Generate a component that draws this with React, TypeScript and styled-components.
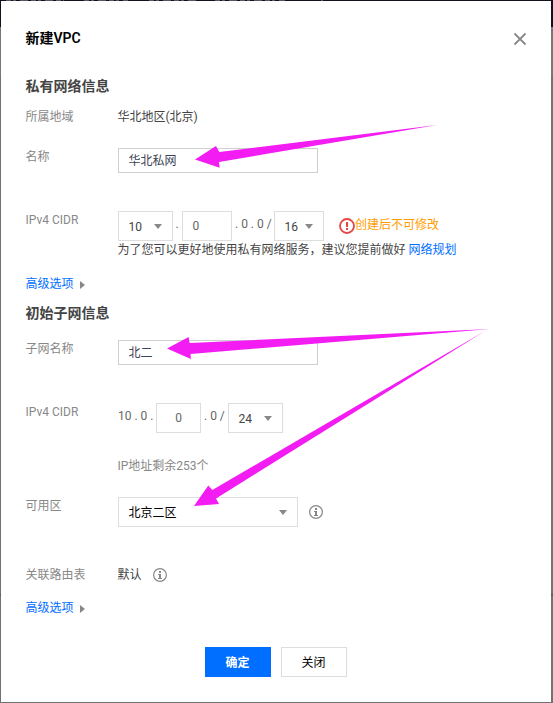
import React from "react";
import styled, { createGlobalStyle } from "styled-components";

const GlobalStyle = createGlobalStyle`
  * { box-sizing: border-box; }
  body {
    margin: 0;
    font-family: Roboto, "Noto Sans CJK SC", sans-serif;
    font-size: 12px;
    line-height: 20px;
    color: #444;
  }
`;

const Backdrop = styled.div`
  position: relative;
  width: 553px;
  height: 703px;
  padding: 1px 2px 1px 1px;
  overflow: hidden;
  background: linear-gradient(#12121f 0 27px, #777 27px 77px, #6c6c6c 77px 78px, #727272 78px 594px, #5e5e5e 594px 596px, #727272 596px);
`;

const Modal = styled.main`
  display: flex;
  flex-direction: column;
  height: 701px;
  padding: 27px 24px 0;
  background: #fff;
`;

const Header = styled.header`
  display: flex;
  justify-content: space-between;
  height: 20px;
  margin-bottom: 28px;
`;

const Title = styled.h1`
  margin: 0;
  padding-left: 0.5px;
  font-size: 14px;
  line-height: 20px;
  font-weight: 600;
  color: #000;
`;

const CloseButton = styled.button`
  width: 14px;
  height: 14px;
  margin: 4px 0 0;
  padding: 0;
  border: 0;
  background: none;
  svg { display: block; }
`;

const SectionTitle = styled.h2<{ $gap: number }>`
  height: 20px;
  margin: 0 0 ${(p) => p.$gap}px;
  padding-left: 0.5px;
  font-size: 14px;
  line-height: 20px;
  font-weight: 600;
  color: #444;
`;

const Row = styled.div<{ $height: number }>`
  display: flex;
  flex: none;
  height: ${(p) => p.$height}px;
`;

const Label = styled.div`
  width: 92px;
  flex: none;
  padding: 1px 0 0 0.5px;
  color: #888;
`;

const Field = styled.div`
  padding: 2px 0 0 1px;
`;

const Value = styled.div`
  display: flex;
  gap: 11px;
  padding: 1px 0 0 0.5px;
  color: #444;
  svg { margin-top: 3px; }
`;

const Line = styled.div`
  display: flex;
  height: 30px;
`;

const TextInput = styled.div`
  display: flex;
  align-items: center;
  width: 200px;
  height: 25px;
  padding: 0 9.5px;
  border: 1px solid #cfcfcf;
  color: #3c4353;
`;

const NumberInput = styled.div<{ $width: number; $center?: boolean }>`
  width: ${(p) => p.$width}px;
  height: 30px;
  padding: ${(p) => (p.$center ? "0" : "0 9.5px")};
  border: 1px solid #ddd;
  line-height: 28px;
  text-align: ${(p) => (p.$center ? "center" : "left")};
  color: #666;
`;

const SelectBox = styled.div<{ $width: number; $dark?: boolean }>`
  display: flex;
  align-items: center;
  justify-content: space-between;
  width: ${(p) => p.$width}px;
  height: 30px;
  padding: 0 10px 0 9.5px;
  border: 1px solid #ddd;
  color: ${(p) => (p.$dark ? "#000" : "#444")};
  span { padding-top: 2px; }
`;

const Separator = styled.span<{ $width: number; $pad?: number }>`
  width: ${(p) => p.$width}px;
  flex: none;
  padding: 3px 0 0 ${(p) => p.$pad ?? 0}px;
  white-space: nowrap;
  color: #666;
`;

const Warning = styled.div`
  display: flex;
  margin-left: 15px;
  padding-top: 4px;
  color: #ff9d00;
  svg { margin-top: 3px; }
`;

const Hint = styled.div`
  height: 20px;
  margin: -1px 0 0 -0.5px;
  white-space: nowrap;
`;

const Link = styled.a`
  color: #006eff;
`;

const Muted = styled.div`
  margin: 23px 0 0 -0.5px;
  color: #888;
`;

const Toggle = styled.div<{ $gap: number }>`
  display: flex;
  gap: 6px;
  height: 20px;
  margin-bottom: ${(p) => p.$gap}px;
  padding: 1px 0 0 0.5px;
  color: #006eff;
  svg { margin-top: 7px; }
`;

const ZoneLine = styled.div`
  display: flex;
  align-items: center;
  gap: 11px;
`;

const Footer = styled.footer`
  display: flex;
  justify-content: center;
  gap: 10px;
`;

const Button = styled.button<{ $primary?: boolean }>`
  width: 66px;
  height: 30px;
  padding: 2px 1px 0 0;
  border: 1px solid ${(p) => (p.$primary ? "#006eff" : "#ddd")};
  background: ${(p) => (p.$primary ? "#006eff" : "#fff")};
  color: ${(p) => (p.$primary ? "#fff" : "#000")};
  font: ${(p) => (p.$primary ? 600 : 400)} 12px/26px Roboto, "Noto Sans CJK SC", sans-serif;
`;

const Annotations = styled.svg`
  position: absolute;
  inset: 0;
  pointer-events: none;
`;

const Caret = () => (
  <svg width="8" height="5" viewBox="0 0 8 5"><path d="M0 0h8L4 5z" fill="#888" /></svg>
);

const RightCaret = () => (
  <svg width="5" height="8" viewBox="0 0 5 8"><path d="M0 0l5 4-5 4z" fill="#888" /></svg>
);

const InfoIcon = () => (
  <svg width="14" height="14" viewBox="0 0 14 14">
    <circle cx="7" cy="7" r="6.4" fill="none" stroke="#888" strokeWidth="1.2" />
    <path d="M6 3h2v2H6zM5 6h3v4h1v1H5v-1h1V7H5z" fill="#888" />
  </svg>
);

const AlertIcon = () => (
  <svg width="16" height="16" viewBox="0 0 16 16">
    <circle cx="8" cy="8" r="7" fill="none" stroke="#e54545" strokeWidth="1.8" />
    <path d="M7 4h2v5H7zM7 10h2v2H7z" fill="#e54545" />
  </svg>
);

function Select({ width, value, dark }: { width: number; value: string; dark?: boolean }) {
  return (
    <SelectBox $width={width} $dark={dark}>
      <span>{value}</span>
      <Caret />
    </SelectBox>
  );
}

export default function App() {
  return (
    <>
      <GlobalStyle />
      <Backdrop>
        <Modal>
          <Header>
            <Title>新建VPC</Title>
            <CloseButton aria-label="关闭">
              <svg width="14" height="14" viewBox="0 0 14 14">
                <path d="M1.5 1.5l11 11M12.500 1.500l-11 11" stroke="#888" strokeWidth="1.8" />
              </svg>
            </CloseButton>
          </Header>

          <SectionTitle $gap={10}>私有网络信息</SectionTitle>
          <Row $height={40}>
            <Label>所属地域</Label>
            <Value>华北地区(北京)</Value>
          </Row>
          <Row $height={63}>
            <Label>名称</Label>
            <Field><TextInput>华北私网</TextInput></Field>
          </Row>
          <Row $height={64}>
            <Label>IPv4 CIDR</Label>
            <Field>
              <Line>
                <Select width={55} value="10" />
                <Separator $width={9} $pad={2.5}>.</Separator>
                <NumberInput $width={50}>0</NumberInput>
                <Separator $width={42} $pad={3}>. 0 . 0 /</Separator>
                <Select width={50} value="16" />
                <Warning><AlertIcon />创建后不可修改</Warning>
              </Line>
              <Hint>为了您可以更好地使用私有网络服务，建议您提前做好 <Link>网络规划</Link></Hint>
            </Field>
          </Row>
          <Toggle $gap={10}>高级选项<RightCaret /></Toggle>

          <SectionTitle $gap={15}>初始子网信息</SectionTitle>
          <Row $height={63}>
            <Label>子网名称</Label>
            <Field><TextInput>北二</TextInput></Field>
          </Row>
          <Row $height={94}>
            <Label>IPv4 CIDR</Label>
            <Field>
              <Line>
                <Separator $width={38}>10 . 0 .</Separator>
                <NumberInput $width={45} $center>0</NumberInput>
                <Separator $width={27} $pad={3}>. 0 /</Separator>
                <Select width={55} value="24" />
              </Line>
              <Muted>IP地址剩余253个</Muted>
            </Field>
          </Row>
          <Row $height={69}>
            <Label>可用区</Label>
            <Field>
              <ZoneLine>
                <Select width={180} value="北京二区" dark />
                <InfoIcon />
              </ZoneLine>
            </Field>
          </Row>
          <Row $height={33}>
            <Label>关联路由表</Label>
            <Value>默认<InfoIcon /></Value>
          </Row>
          <Toggle $gap={30}>高级选项<RightCaret /></Toggle>

          <Footer>
            <Button $primary>确定</Button>
            <Button>关闭</Button>
          </Footer>
        </Modal>

        <Annotations width="553" height="703" viewBox="0 0 553 703">
          <g stroke="#56565e" strokeDasharray="5 2 3 4 8 3">
            <path d="M6 .5h58M84 .5h44M149 .5h47M215 .5h70M321 .5h2" />
          </g>
          <g fill="#f31cf3">
            <path d="M195 159.500L216 146l3.300 6L437 125 219 162l.6 5.700z" />
            <path d="M167 348.500L188.600 337l1 6L490 329 190.500 354l.4 5z" />
            <path d="M194 506l14.300-20.500 4 4.500L485 331 216 498.500l3 5.500z" />
          </g>
        </Annotations>
      </Backdrop>
    </>
  );
}
